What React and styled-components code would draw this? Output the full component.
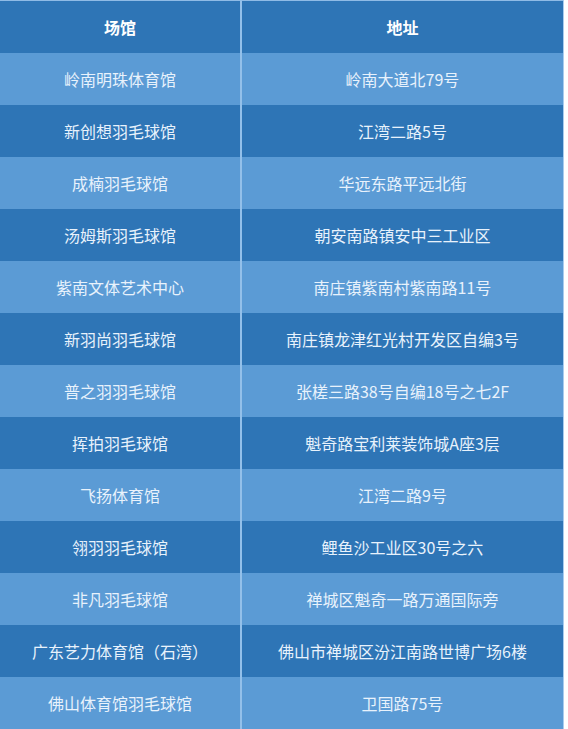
import React from 'react'
import styled, { createGlobalStyle } from 'styled-components'

const Global = createGlobalStyle`
  html, body {
    margin: 0;
    padding: 0;
    background: #ffffff;
  }
  body {
    font-family: "Noto Sans CJK SC", "Liberation Sans", sans-serif;
  }
`

const Table = styled.table`
  width: 564px;
  border-collapse: collapse;
  table-layout: fixed;
  border-top: 1px solid #8fbbe6;
  border-right: 1px solid #a9cdef;
`

const Row = styled.tr`
  height: 52px;
  background: ${p => (p.$dark ? '#2e75b6' : '#5b9bd5')};
`

const Cell = styled.td`
  padding: 0;
  text-align: center;
  vertical-align: middle;
  font-size: 16px;
  color: #e8f2fc;
  white-space: nowrap;
  &:first-child {
    width: 240px;
    border-right: 2px solid #93c0ea;
  }
`

const Head = styled(Cell).attrs({ as: 'th' })`
  font-weight: 700;
  color: #ffffff;
  &:first-child {
    width: 240px;
  }
`

const venues = [
  ['岭南明珠体育馆', '岭南大道北79号'],
  ['新创想羽毛球馆', '江湾二路5号'],
  ['成楠羽毛球馆', '华远东路平远北街'],
  ['汤姆斯羽毛球馆', '朝安南路镇安中三工业区'],
  ['紫南文体艺术中心', '南庄镇紫南村紫南路11号'],
  ['新羽尚羽毛球馆', '南庄镇龙津红光村开发区自编3号'],
  ['普之羽羽毛球馆', '张槎三路38号自编18号之七2F'],
  ['挥拍羽毛球馆', '魁奇路宝利莱装饰城A座3层'],
  ['飞扬体育馆', '江湾二路9号'],
  ['翎羽羽毛球馆', '鲤鱼沙工业区30号之六'],
  ['非凡羽毛球馆', '禅城区魁奇一路万通国际旁'],
  ['广东艺力体育馆（石湾）', '佛山市禅城区汾江南路世博广场6楼'],
  ['佛山体育馆羽毛球馆', '卫国路75号'],
]

export default function App() {
  return (
    <>
      <Global />
      <Table>
        <thead>
          <Row $dark>
            <Head>场馆</Head>
            <Head>地址</Head>
          </Row>
        </thead>
        <tbody>
          {venues.map(([name, addr], i) => (
            <Row key={name} $dark={i % 2 === 1}>
              <Cell>{name}</Cell>
              <Cell>{addr}</Cell>
            </Row>
          ))}
        </tbody>
      </Table>
    </>
  )
}
